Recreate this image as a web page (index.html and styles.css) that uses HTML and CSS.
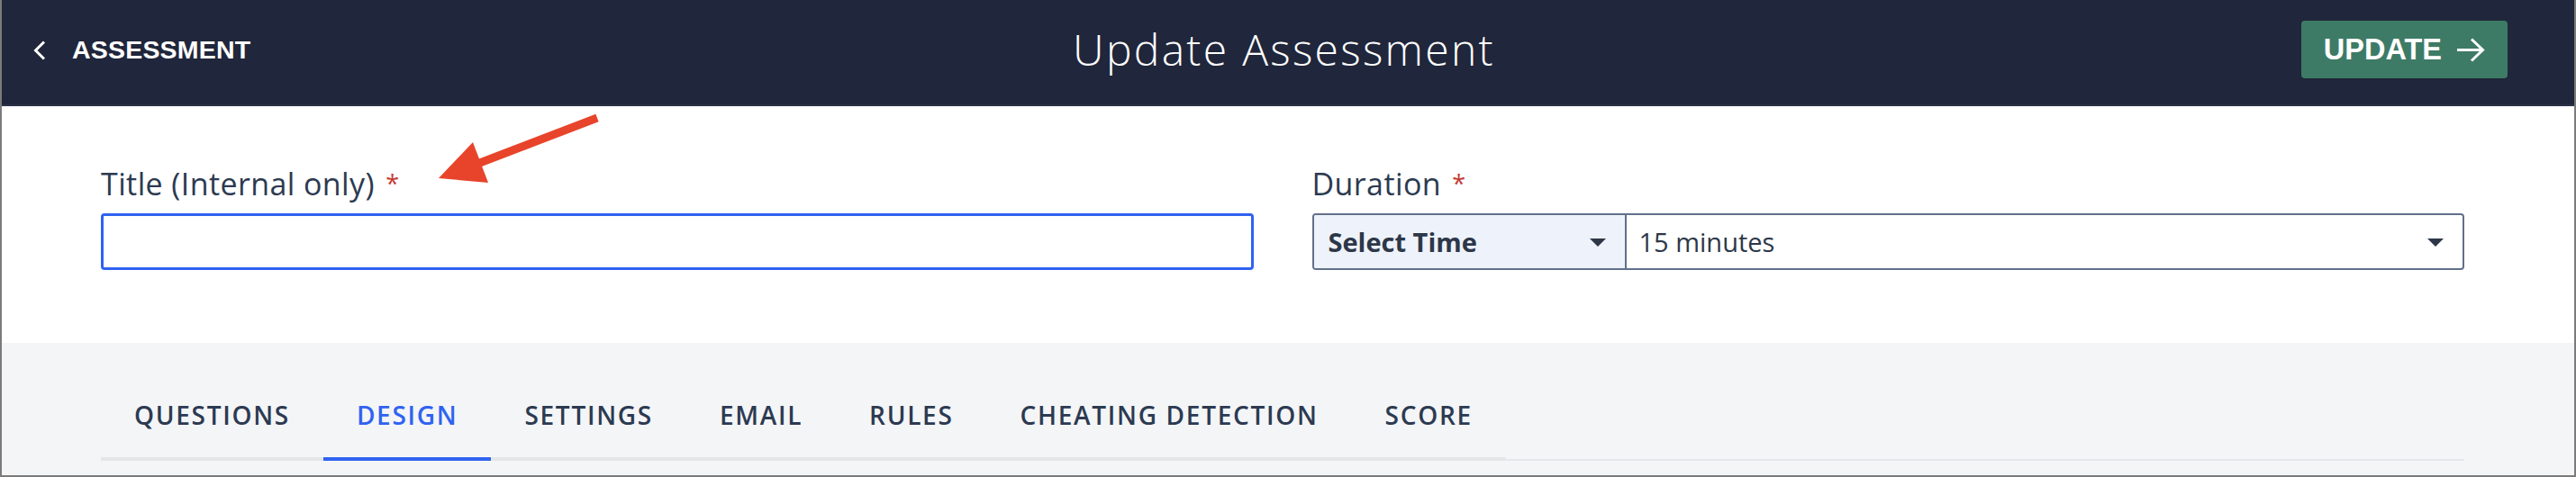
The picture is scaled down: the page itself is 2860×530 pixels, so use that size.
FILE: index.html
```html
<!DOCTYPE html>
<html lang="en">
<head>
    <meta charset="UTF-8">
    <title>Update Assessment</title>
    <meta name="viewport" content="width=device-width, initial-scale=1.0">
    <link rel="stylesheet" href="styles.css">
</head>
<body>
<div class="page">
    <header class="topbar">
        <a class="back-link" href="#">
            <svg class="back-icon" width="14" height="22" viewBox="0 0 14 22">
                <polyline points="12,1.5 2.5,11 12,20.5" fill="none" stroke="#ffffff" stroke-width="3"/>
            </svg>
            <span>ASSESSMENT</span>
        </a>
        <h1 class="page-title">Update Assessment</h1>
        <button class="update-btn" type="button">
            <span>UPDATE</span>
            <svg width="31" height="27" viewBox="0 0 31 27">
                <line x1="0" y1="13.5" x2="28" y2="13.5" stroke="#ffffff" stroke-width="3"/>
                <polyline points="16,1.5 28.5,13.5 16,25.5" fill="none" stroke="#ffffff" stroke-width="3"/>
            </svg>
        </button>
    </header>

    <section class="form">
        <div class="field">
            <label class="field-label" for="title">Title (Internal only) <span class="req">*</span></label>
            <input class="text-input" id="title" type="text">
        </div>
        <div class="field">
            <label class="field-label">Duration <span class="req">*</span></label>
            <div class="duration-select">
                <div class="unit">
                    <span>Select Time</span>
                    <svg class="caret" width="18" height="9" viewBox="0 0 18 9"><polygon points="0,0 18,0 9,9" fill="#2d3748"/></svg>
                </div>
                <div class="value">
                    <span>15 minutes</span>
                    <svg class="caret" width="18" height="9" viewBox="0 0 18 9"><polygon points="0,0 18,0 9,9" fill="#2d3748"/></svg>
                </div>
            </div>
        </div>
    </section>

    <section class="tabs-area">
        <div class="tabbar">
            <ul class="tabs">
                <li>QUESTIONS</li>
                <li class="active">DESIGN</li>
                <li>SETTINGS</li>
                <li>EMAIL</li>
                <li>RULES</li>
                <li>CHEATING DETECTION</li>
                <li>SCORE</li>
            </ul>
        </div>
    </section>

    <!-- red annotation arrow pointing at the title label -->
    <svg class="annotation" width="200" height="95" viewBox="0 0 200 95">
        <line x1="58" y1="62" x2="191" y2="11" stroke="#e8442b" stroke-width="9"/>
        <polygon points="15,78 53,38 70,83" fill="#e8442b"/>
    </svg>
</div>
</body>
</html>
```

FILE: styles.css
```css
* {
    box-sizing: border-box;
}
body {
    margin: 0;
    font-family: "Open Sans", "Liberation Sans", sans-serif;
    color: #2c3a50;
}
.page {
    position: relative;
    width: 2860px;
    height: 530px;
    display: flex;
    flex-direction: column;
    border: 2px solid #7b7b7b;
    border-top: 0;
    background-color: #f4f5f7;
}

/* top bar */
.topbar {
    height: 118px;
    display: grid;
    grid-template-columns: 1fr auto 1fr;
    align-items: center;
    padding: 0 74px 6px 35px;
    background-color: #20263b;
    border-bottom: 2px solid #2c3347;
}
.back-link {
    justify-self: start;
    display: flex;
    align-items: center;
    gap: 29px;
    color: #ffffff;
    text-decoration: none;
    font-family: "Liberation Sans", Arial, sans-serif;
    font-weight: bold;
    font-size: 28.5px;
    line-height: 28px;
    letter-spacing: 0.2px;
}
.back-icon {
    margin-top: 1px;
}
.page-title {
    margin: 0 0 0 30px;
    font-weight: 300;
    font-size: 48px;
    line-height: 48px;
    letter-spacing: 2.3px;
    color: #ffffff;
}
.update-btn {
    justify-self: end;
    display: flex;
    align-items: center;
    gap: 17px;
    height: 64px;
    padding: 0 25px;
    border: 0;
    border-radius: 4px;
    background-color: #3d7b66;
    color: #ffffff;
    font-family: "Liberation Sans", Arial, sans-serif;
    font-weight: bold;
    font-size: 32.5px;
    line-height: 32px;
}

/* form fields */
.form {
    display: grid;
    grid-template-columns: 1fr 1fr;
    column-gap: 65px;
    padding: 66px 122px 81px 110px;
    background-color: #ffffff;
}
.field-label {
    display: block;
    margin-bottom: 13px;
    font-size: 34px;
    line-height: 40px;
    letter-spacing: 0.4px;
    color: #2c3a50;
}
.req {
    margin-left: 3px;
    font-size: 27px;
    vertical-align: 3px;
    color: #c53b34;
}
.text-input {
    display: block;
    width: 100%;
    height: 63px;
    border: 3px solid #2f62f0;
    border-radius: 4px;
    outline: none;
    background: #ffffff;
}
.duration-select {
    display: flex;
    height: 63px;
    border: 2px solid #627089;
    border-radius: 4px;
    overflow: hidden;
    font-size: 29px;
    color: #2d3748;
}
.unit {
    width: 347px;
    display: flex;
    align-items: center;
    justify-content: space-between;
    padding: 0 21px 0 16px;
    background-color: #eef2fa;
    border-right: 2px solid #627089;
    font-weight: bold;
}
.value {
    flex: 1;
    display: flex;
    align-items: center;
    justify-content: space-between;
    padding: 0 21px 0 14px;
}
.caret {
    margin-top: 2px;
}

/* tabs */
.tabs-area {
    flex: 1;
    padding: 61px 122px 0 110px;
}
.tabbar {
    border-bottom: 2px solid #e6e7ea;
}
.tabs {
    display: inline-flex;
    margin: 0 0 -2px 0;
    padding: 0;
    list-style: none;
    border-bottom: 4px solid #e4e5e7;
}
.tabs li {
    padding: 0 37px 28px;
    font-weight: 600;
    font-size: 28px;
    line-height: 38px;
    letter-spacing: 1.7px;
    color: #2c3a51;
}
.tabs li.active {
    color: #2f63f0;
    border-bottom: 4px solid #2f63f0;
    margin-bottom: -4px;
}

.annotation {
    position: absolute;
    left: 470px;
    top: 120px;
}
```
